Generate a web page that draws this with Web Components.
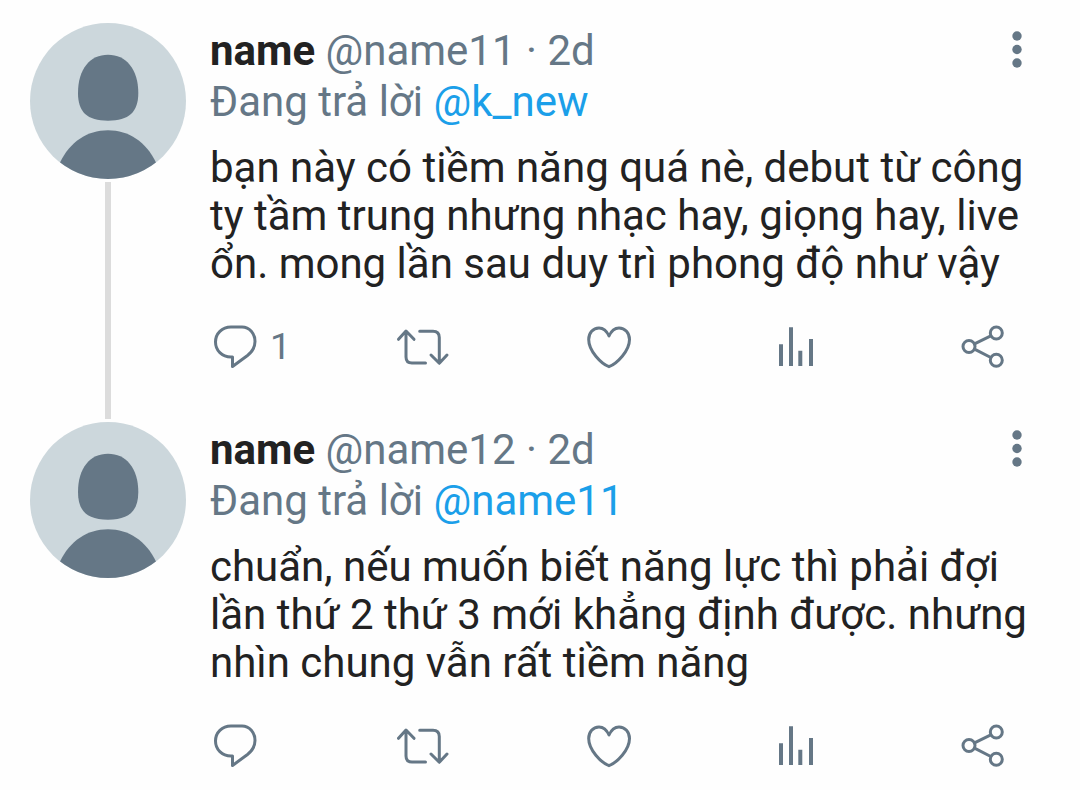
<!DOCTYPE html>
<html lang="vi">
<head>
<meta charset="utf-8">
<meta name="viewport" content="width=device-width, initial-scale=1">
<title>Thread</title>
<style>
    body {
        margin: 0;
        background: #fefefe;
        font-family: Roboto, 'Liberation Sans', sans-serif;
        --text: #222222;
        --muted: #657786;
        --link: #1b9fe9;
        --line: #dcdcdc;
        --avatar-bg: #ccd7dc;
    }
</style>
</head>
<body>

<tweet-thread>
    <tweet-post name="name" handle="@name11" time="2d" reply-to="@k_new" replies="1" threaded>bạn này có tiềm năng quá nè, debut từ công ty tầm trung nhưng nhạc hay, giọng hay, live ổn. mong lần sau duy trì phong độ như vậy</tweet-post>
    <tweet-post name="name" handle="@name12" time="2d" reply-to="@name11">chuẩn, nếu muốn biết năng lực thì phải đợi lần thứ 2 thứ 3 mới khẳng định được. nhưng nhìn chung vẫn rất tiềm năng</tweet-post>
</tweet-thread>

<script>
const ICONS = {
    reply: '<path d="M21 5h11C39.500 5 45 11.500 45 19.500c0 6-3 10.500-7.500 14L22.500 44.500V35H21C12 35 5.500 28.500 5.500 20S12 5 21 5z"/>',
    retweet: '<path d="M1.500 17.300 9 9l8 8.300M9 9.500V35q0 6 6 6h13.500M22.700 9.300H36q6.300 0 6.300 6.200V41M34 33l8.300 8.300L50 33"/>',
    like: '<path d="M25 14C22.500 8.500 19 6 15 6 9 6 4.700 11 4.700 17.500 4.700 29 17 41.500 25 44.700 33 41.500 45.500 29 45.500 17.500 45.500 11 41 6 35 6c-4 0-7.500 2.500-10 8z"/>',
    stats: '<path stroke-width="4" stroke-linecap="butt" d="M10 22.300V44M20 5.300V44M29.300 28.700V44M40 17V44"/>',
    share: '<circle cx="11" cy="24.500" r="6"/><circle cx="38.300" cy="11" r="6"/><circle cx="38.300" cy="38.300" r="6"/><path d="M16.500 21.800l16.300-8M16.500 27.200l16.300 8.300"/>'
};

class TweetThread extends HTMLElement {
    constructor() {
        super();
        this.attachShadow({ mode: 'open' }).innerHTML = `
            <style>
                :host { display: block; }
                main { display: flex; flex-direction: column; padding: 23px 48px 0 30px; }
            </style>
            <main><slot></slot></main>
        `;
    }
}

class TweetAvatar extends HTMLElement {
    constructor() {
        super();
        this.attachShadow({ mode: 'open' }).innerHTML = `
            <style>
                :host { display: block; width: 156px; height: 156px; border-radius: 50%; overflow: hidden; background: var(--avatar-bg); }
                svg { display: block; width: 100%; height: 100%; fill: var(--muted); }
            </style>
            <svg viewBox="0 0 156 156" aria-hidden="true">
                <path d="M78 31.700C60 31.700 48 46 48 70c0 19 9 27.700 30 27.700S108.300 89 108.300 70C108.300 46 96 31.700 78 31.700z"/>
                <path d="M30 139.500C40 119 57 107.300 78 107.300s38 11.700 48 32.200V156H30z"/>
            </svg>
        `;
    }
}

class TweetAction extends HTMLElement {
    constructor() {
        super();
        this.attachShadow({ mode: 'open' });
    }

    connectedCallback() {
        const count = this.getAttribute('count');
        this.shadowRoot.innerHTML = `
            <style>
                :host { display: block; }
                button {
                    display: flex;
                    align-items: center;
                    gap: 10px;
                    padding: 0;
                    border: 0;
                    background: none;
                    color: var(--muted);
                    font: 37px/50px Roboto, 'Liberation Sans', sans-serif;
                    cursor: pointer;
                }
                svg {
                    flex: none;
                    width: 50px;
                    height: 50px;
                    overflow: visible;
                    fill: none;
                    stroke: currentColor;
                    stroke-width: 3;
                    stroke-linecap: round;
                    stroke-linejoin: round;
                }
            </style>
            <button type="button" aria-label="${this.getAttribute('label')}">
                <svg viewBox="0 0 50 50" aria-hidden="true">${ICONS[this.getAttribute('icon')]}</svg>
                ${count ? `<span>${count}</span>` : ''}
            </button>
        `;
    }
}

class TweetPost extends HTMLElement {
    constructor() {
        super();
        this.attachShadow({ mode: 'open' });
    }

    connectedCallback() {
        const attr = (key) => this.getAttribute(key) || '';
        this.shadowRoot.innerHTML = `
            <style>
                :host { display: block; }
                article { display: flex; gap: 24px; }

                .rail { display: flex; flex-direction: column; align-items: center; gap: 3px; padding-bottom: 3px; }
                .line { flex: 1; width: 6px; background: var(--line); }

                .content { flex: 1; min-width: 0; padding-top: 2px; }
                :host([threaded]) .content { padding-bottom: 50px; }
                header { display: flex; justify-content: space-between; }
                .meta, .replying { color: var(--muted); font-size: 42px; line-height: 51px; }
                .meta b { color: var(--text); }
                a { color: var(--link); text-decoration: none; }

                .menu { flex: none; width: 30px; padding: 0; border: 0; background: none; color: var(--muted); cursor: pointer; }
                .menu svg { display: block; width: 30px; height: 51px; fill: currentColor; }

                p { margin: 17px 0 0; color: var(--text); font-size: 42px; line-height: 48px; }

                .actions {
                    display: grid;
                    grid-template-columns: repeat(4, 1fr) 50px;
                    padding-right: 24px;
                    margin-top: 34px;
                }
            </style>
            <article>
                <div class="rail">
                    <tweet-avatar></tweet-avatar>
                    ${this.hasAttribute('threaded') ? '<div class="line"></div>' : ''}
                </div>
                <div class="content">
                    <header>
                        <div class="meta"><b>${attr('name')}</b> ${attr('handle')} · ${attr('time')}</div>
                        <button class="menu" type="button" aria-label="Menu">
                            <svg viewBox="0 0 30 51" aria-hidden="true">
                                <circle cx="15" cy="11" r="4.700"/><circle cx="15" cy="24.500" r="4.700"/><circle cx="15" cy="38" r="4.700"/>
                            </svg>
                        </button>
                    </header>
                    <div class="replying">Đang trả lời <a href="#">${attr('reply-to')}</a></div>
                    <p><slot></slot></p>
                    <div class="actions">
                        <tweet-action icon="reply" label="Trả lời" count="${attr('replies')}"></tweet-action>
                        <tweet-action icon="retweet" label="Tweet lại"></tweet-action>
                        <tweet-action icon="like" label="Thích"></tweet-action>
                        <tweet-action icon="stats" label="Thống kê"></tweet-action>
                        <tweet-action icon="share" label="Chia sẻ"></tweet-action>
                    </div>
                </div>
            </article>
        `;
    }
}

customElements.define('tweet-thread', TweetThread);
customElements.define('tweet-avatar', TweetAvatar);
customElements.define('tweet-action', TweetAction);
customElements.define('tweet-post', TweetPost);
</script>
</body>
</html>
